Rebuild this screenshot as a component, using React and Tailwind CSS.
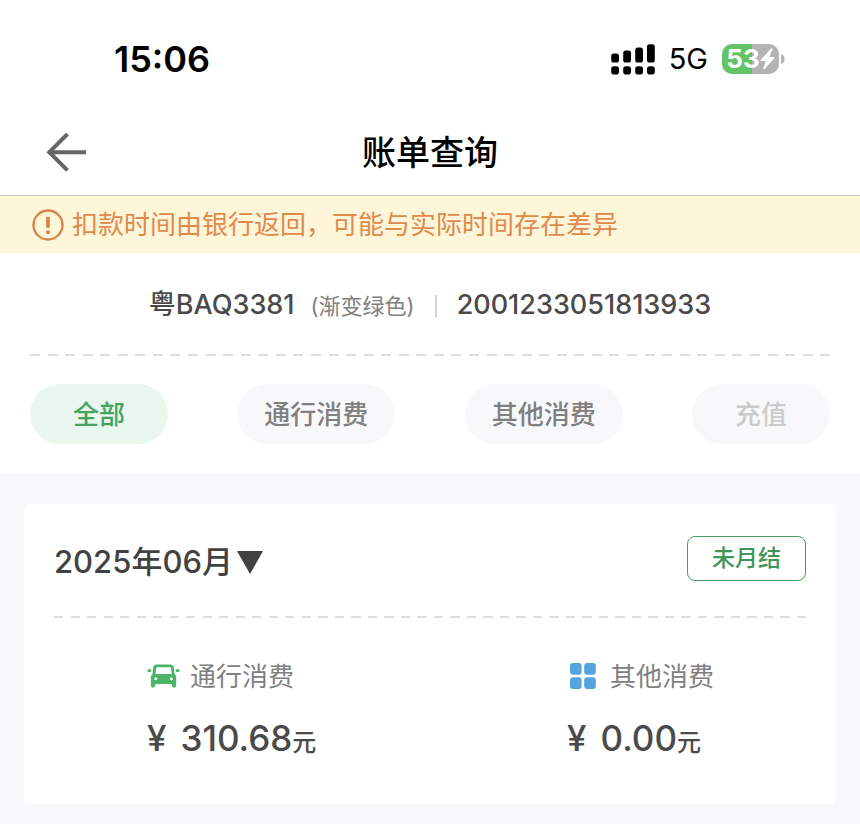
import clsx from 'clsx';

const tabs = [
  { label: '全部', active: true },
  { label: '通行消费' },
  { label: '其他消费' },
  { label: '充值', disabled: true },
];

function Signal() {
  return (
    <svg width="44" height="31" viewBox="0 0 44 31" fill="#000" aria-hidden="true">
      <rect x="0.2" y="9.5" width="7.8" height="9" rx="2.6" />
      <rect x="12.2" y="6.5" width="7.8" height="12" rx="2.6" />
      <rect x="24.2" y="3.5" width="7.8" height="15" rx="2.6" />
      <rect x="36" y="0.2" width="7.8" height="18.3" rx="2.6" />
      {[0.2, 12.2, 24.2, 36].map((x) => (
        <rect key={x} x={x} y="22.3" width="7.8" height="8.2" rx="2.8" />
      ))}
    </svg>
  );
}

function Battery() {
  return (
    <div className="flex items-center gap-[2px]">
      <div className="flex h-[30px] w-[57px] items-center justify-center rounded-[10px] bg-[linear-gradient(90deg,#62c466_53%,#b3b3b3_53%)] text-white">
        <span className="text-[26px] font-bold leading-[30px]">53</span>
        <svg width="15" height="22" viewBox="0 0 15 22" fill="currentColor" aria-hidden="true">
          <path d="M11.2.6.7 11.8c-.5.5-.2 1.200.4 1.200h4.800L3.300 20.300c-.4 1 .6 1.500 1.300.8L14.300 10.200c.4-.5.2-1.200-.4-1.200H9.300l3.100-7.500c.4-1-.5-1.600-1.200-.9Z" />
        </svg>
      </div>
      <svg width="4" height="10" viewBox="0 0 4 10" fill="#b3b3b3" aria-hidden="true">
        <path d="M0 0c2.300.6 3.600 2.600 3.600 5S2.300 9.400 0 10Z" />
      </svg>
    </div>
  );
}

function BackArrow() {
  return (
    <svg width="40" height="40" viewBox="0 0 40 40" fill="none" stroke="#666" strokeWidth="4" aria-hidden="true">
      <path d="M21.500 1 3.300 19.200l18.200 18.200M3 19.200h37" />
    </svg>
  );
}

function WarnIcon() {
  return (
    <svg width="32" height="32" viewBox="0 0 32 32" fill="none" aria-hidden="true">
      <circle cx="16" cy="16" r="14.500" stroke="#d9834f" strokeWidth="2.400" />
      <path d="M16 9.300v8" stroke="#d9834f" strokeWidth="3.800" strokeLinecap="round" />
      <circle cx="16" cy="23.200" r="2" fill="#d9834f" />
    </svg>
  );
}

function CarIcon() {
  return (
    <svg width="33" height="24" viewBox="0 0 33 24" aria-hidden="true">
      <path
        fill="#4cb465"
        fillRule="evenodd"
        d="M9.500.5h14.200c1.600 0 2.800.9 3 2.400l.9 7.400c1 .7 1.600 1.700 1.600 2.900v8.200c0 1.300-.8 2.100-2.100 2.100s-2.100-.8-2.200-2.100l-.1-1.300H8.300l-.1 1.300c-.1 1.300-.9 2.100-2.200 2.100s-2.100-.8-2.100-2.100v-8.200c0-1.200.6-2.200 1.600-2.900l.9-7.400C6.600 1.400 7.900.5 9.500.5Zm.7 2.700c-.5 0-.8.2-.9.700l-.9 6h16.400l-.9-6c-.1-.5-.4-.7-.9-.7ZM8.800 13.300a1.500 1.500 0 1 0 0 3 1.500 1.500 0 0 0 0-3Zm15.600 0a1.500 1.500 0 1 0 0 3 1.500 1.500 0 0 0 0-3Z"
      />
      <path d="M1.800 6.700H3M30 6.700h1.200" stroke="#4cb465" strokeWidth="2.800" strokeLinecap="round" />
    </svg>
  );
}

function GridIcon() {
  return (
    <svg width="33" height="26" viewBox="-3 0 33 26" fill="#55a3df" aria-hidden="true">
      <rect width="11.600" height="11.800" rx="3" />
      <rect x="14.200" width="11.600" height="11.800" rx="3" />
      <rect y="14.200" width="11.600" height="11.800" rx="3" />
      <rect x="14.200" y="14.200" width="11.600" height="11.800" rx="3" />
    </svg>
  );
}

function Dashes() {
  return (
    <div className="h-[2px] bg-[repeating-linear-gradient(90deg,#dedede_0_1.25%,transparent_1.25%_2.195%)]" />
  );
}

function Amount({ icon, label, value }) {
  return (
    <div>
      <div className="flex h-9 items-center gap-[10px] text-[26px] text-[#808080]">
        {icon}
        <span>{label}</span>
      </div>
      <p className="mt-5 flex items-baseline text-[35px] font-medium leading-[48px] text-[#4a4a4a]">
        <span className="mr-[14px]">¥</span>
        {value}
        <span className="text-2xl">元</span>
      </p>
    </div>
  );
}

export default function App() {
  return (
    <div className="min-h-screen bg-[#f8f8fb] font-['Inter','Noto_Sans_CJK_SC',sans-serif]">
      <div className="bg-white">
        <div className="flex h-[110px] items-center justify-between pl-[114px] pr-[75px] pt-2">
          <span className="text-[36px] font-semibold leading-[48px]">15:06</span>
          <div className="flex items-center gap-[14px]">
            <Signal />
            <span className="text-[29px] leading-8">5G</span>
            <Battery />
          </div>
        </div>

        <header className="grid h-[86px] grid-cols-[1fr_auto_1fr] items-center border-b border-[#cfccc6] px-[46px]">
          <button type="button" aria-label="返回" className="justify-self-start">
            <BackArrow />
          </button>
          <h1 className="text-[34px] font-medium leading-[48px] text-black">账单查询</h1>
        </header>

        <div className="flex h-[57px] items-center gap-2 bg-[#fdf6d9] px-8 text-[26px] text-[#e08a4c]">
          <WarnIcon />
          <p>扣款时间由银行返回，可能与实际时间存在差异</p>
        </div>

        <div className="px-[30px] pb-[30px]">
          <div className="flex h-[101px] items-center justify-center pt-1 text-[27px] font-medium text-[#4a4a4a]">
            <p className="flex items-baseline gap-4">
              <span>粤BAQ3381</span>
              <span className="text-[22px] font-normal text-[#808080]">(渐变绿色)</span>
            </p>
            <span className="mx-5 h-[22px] w-[2px] bg-[#d4d4d4]" />
            <span>2001233051813933</span>
          </div>
          <Dashes />
          <div className="mt-7 flex justify-between">
            {tabs.map(({ label, active, disabled }) => (
              <button
                key={label}
                type="button"
                disabled={disabled}
                className={clsx(
                  'h-[60px] min-w-[138px] rounded-full px-[27px] text-[26px] font-medium',
                  active && 'bg-[#e9f7ee] text-[#43a35f]',
                  disabled && 'bg-[#f8f8fb] text-[#cbcbcb]',
                  !active && !disabled && 'bg-[#f8f8fb] text-[#808080]'
                )}
              >
                {label}
              </button>
            ))}
          </div>
        </div>
      </div>

      <section className="mx-6 mt-[30px] rounded-lg bg-white px-[30px] pb-[42px] pt-8">
        <div className="flex items-start justify-between">
          <button type="button" className="flex items-center gap-1 text-[31px] font-medium leading-[52px] text-[#424242]">
            2025年06月
            <svg width="26" height="23" viewBox="0 0 26 23" fill="currentColor" aria-hidden="true">
              <path d="M0 0h26L13 23Z" />
            </svg>
          </button>
          <span className="rounded-lg border border-[#4a9d61] px-6 text-[23px] font-medium leading-[43px] text-[#3f9656]">
            未月结
          </span>
        </div>
        <div className="mt-7">
          <Dashes />
        </div>
        <div className="mt-10 grid grid-cols-[420px_1fr] pl-[93px]">
          <Amount icon={<CarIcon />} label="通行消费" value="310.68" />
          <Amount icon={<GridIcon />} label="其他消费" value="0.00" />
        </div>
      </section>
    </div>
  );
}
